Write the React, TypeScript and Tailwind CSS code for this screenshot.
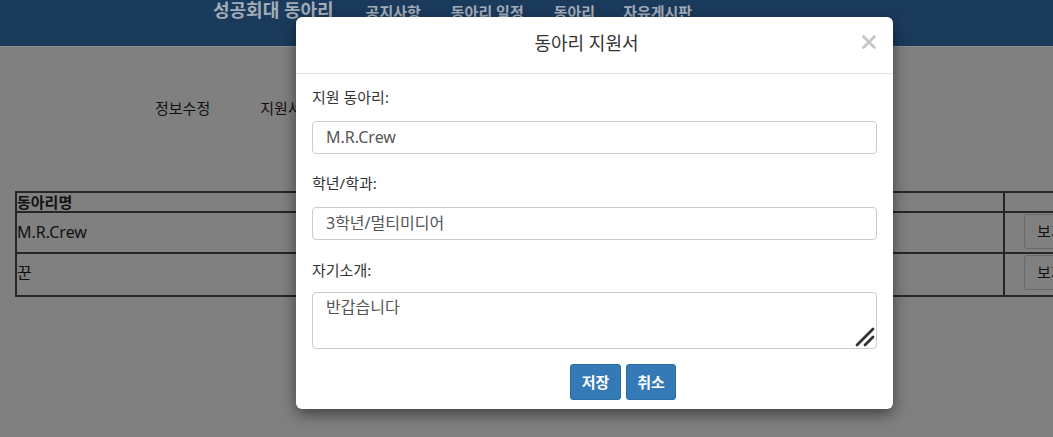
import { X } from 'lucide-react';

const font = { fontFamily: '"Noto Sans", "Noto Sans CJK KR", sans-serif' };

const clubs = ['M.R.Crew', '꾼'];

function Field({ label, value, className }: { label: string; value: string; className: string }) {
  return (
    <div className={className}>
      <div className="text-[15px] leading-[20px] text-[#333]">{label}</div>
      <div className="mt-[14px] h-[33px] rounded-[4px] border border-[#ccc] px-[13px] text-[16px] leading-[31px] text-[#555]">
        {value}
      </div>
    </div>
  );
}

export default function App() {
  return (
    <div className="relative h-[437px] w-[1053px] overflow-hidden bg-[#808080]" style={font}>
      {/* dimmed page behind the dialog */}
      <header className="flex h-[47px] items-start border-b border-[#8a8f94] bg-[#1b3b5d] pl-[213px] text-[#a3adb8]">
        <span className="mt-[1px] whitespace-nowrap text-[18px] font-bold leading-[18px]">성공회대 동아리</span>
        <nav className="ml-[32px] mt-[4px] flex whitespace-nowrap text-[15px] font-bold leading-[16px]">
          <span>공지사항</span>
          <span className="ml-[30px]">동아리 일정</span>
          <span className="ml-[30px]">동아리</span>
          <span className="ml-[28px]">자유게시판</span>
        </nav>
      </header>

      <div className="mt-[51px] flex pl-[155px] text-[15px] leading-[20px] text-[#111]">
        <span>정보수정</span>
        <span className="ml-[50px]">지원서</span>
      </div>

      <div className="ml-[15px] mt-[73px] w-[1060px] border-2 border-[#262626] text-[#111]">
        <div className="grid h-[20px] grid-cols-[986px_1fr] border-b-2 border-[#262626]">
          <div className="text-[15px] font-bold leading-[18px]">동아리명</div>
          <div className="border-l-2 border-[#262626]" />
        </div>
        {clubs.map((c, i) => (
          <div
            key={c}
            className={`grid h-[41px] grid-cols-[986px_1fr] ${i === 0 ? 'border-b-2 border-[#262626]' : ''}`}
          >
            <div className="pt-[8px] text-[16px] leading-[22px]">{c}</div>
            <div className="border-l-2 border-[#262626] pl-[19px] pt-[1px]">
              <div className="h-[35px] w-[60px] whitespace-nowrap rounded-[3px] border border-[#6a6a6a] pl-[12px] text-[15px] leading-[33px]">
                보기
              </div>
            </div>
          </div>
        ))}
      </div>

      {/* dialog */}
      <div className="absolute left-[296px] top-[17px] h-[392px] w-[597px] rounded-[6px] bg-white shadow-[0_5px_15px_rgba(0,0,0,0.5)]">
        <div className="relative h-[57px] border-b border-[#e5e5e5] pr-[16px] text-center text-[18px] leading-[52px] text-[#333]">
          동아리 지원서
          <X size={22} strokeWidth={3} className="absolute right-[13px] top-[14px] text-[#c6c6c6]" />
        </div>
        <div className="px-[16px]">
          <Field className="pt-[13px]" label="지원 동아리:" value="M.R.Crew" />
          <Field className="pt-[19px]" label="학년/학과:" value="3학년/멀티미디어" />
          <div className="pt-[20px]">
            <div className="text-[15px] leading-[20px] text-[#333]">자기소개:</div>
            <div className="relative mt-[12px] h-[57px] rounded-[4px] border border-[#ccc] px-[13px] pt-[3px] text-[16px] leading-[22px] text-[#555]">
              반갑습니다
              <svg width="20" height="20" viewBox="0 0 20 20" className="absolute bottom-[1px] right-[1px]">
                <path d="M2 18 L18 2 M10 18 L18 10" stroke="#333" strokeWidth="2.8" strokeLinecap="round" />
              </svg>
            </div>
          </div>
          <div className="mt-[15px] flex gap-[5px] pl-[258px]">
            <button className="h-[36px] w-[51px] rounded-[3px] border border-[#2e6da4] bg-[#337ab7] text-[15px] font-bold text-white">
              저장
            </button>
            <button className="h-[36px] w-[50px] rounded-[3px] border border-[#2e6da4] bg-[#337ab7] text-[15px] font-bold text-white">
              취소
            </button>
          </div>
        </div>
      </div>
    </div>
  );
}
